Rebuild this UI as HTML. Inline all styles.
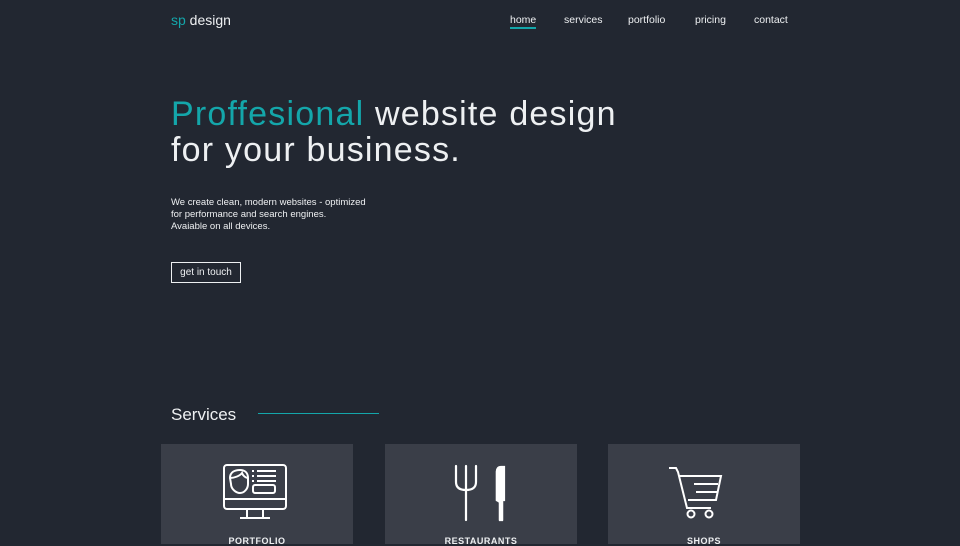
<!DOCTYPE html>
<html><head><style>
*{margin:0;padding:0;box-sizing:border-box}
body{width:960px;height:540px;overflow:hidden;background:#222731;font-family:"Liberation Sans",sans-serif;color:#eef0f2;position:relative}
.a{position:absolute}
.t{color:#14a6aa}
nav a{position:absolute;top:14px;font-size:10.5px;color:#eef0f2;text-decoration:none}
.card{position:absolute;top:444px;width:192px;height:100px;background:#3a3e48}
.card p{position:absolute;top:92px;width:100%;text-align:center;font-size:9px;font-weight:bold;letter-spacing:.5px}
</style></head><body>
<div class="a" style="left:171px;top:12px;font-size:14px"><span class="t">sp</span> design</div>
<nav>
<a style="left:510px;border-bottom:2px solid #14a6aa;padding-bottom:1px">home</a>
<a style="left:564px">services</a>
<a style="left:628px">portfolio</a>
<a style="left:695px">pricing</a>
<a style="left:754px">contact</a>
</nav>
<div class="a" style="left:171px;top:96px;font-size:34px;line-height:36px;letter-spacing:1.2px"><span class="t">Proffesional</span> website design<br>for your business.</div>
<div class="a" style="left:171px;top:197px;font-size:9.5px;line-height:12px">We create clean, modern websites - optimized<br>for performance and search engines.<br>Avaiable on all devices.</div>
<div class="a" style="left:171px;top:262px;width:70px;height:21px;border:1.5px solid #eef0f2;font-size:10px;line-height:19px;text-align:center">get in touch</div>
<div class="a" style="left:171px;top:405px;font-size:17px">Services</div>
<div class="a" style="left:258px;top:413px;width:121px;height:1px;background:#14a6aa"></div>
<div class="card" style="left:161px"><p>PORTFOLIO</p>
<svg class="a" style="left:60px;top:18px" width="70" height="60" viewBox="0 0 70 60" fill="none" stroke="#fff" stroke-width="2"><rect x="3" y="3" width="62" height="44" rx="3"/><line x1="3" y1="37" x2="65" y2="37"/><line x1="26" y1="47" x2="26" y2="56"/><line x1="42" y1="47" x2="42" y2="56"/><line x1="19" y1="56" x2="49" y2="56"/><path d="M9 16c0-6 5-8 10-8 5 0 8 3 8 8v6c0 5-4 9-8 9s-9-4-9-9z"/><path d="M9 16c4 0 10-2 12-5 1 3 4 5 6 5"/><line x1="31" y1="9" x2="33" y2="9"/><line x1="36" y1="9" x2="55" y2="9"/><line x1="31" y1="14" x2="33" y2="14"/><line x1="36" y1="14" x2="55" y2="14"/><line x1="31" y1="19" x2="33" y2="19"/><line x1="36" y1="19" x2="55" y2="19"/><rect x="32" y="23" width="22" height="8" rx="2"/></svg></div>
<div class="card" style="left:385px"><p>RESTAURANTS</p>
<svg class="a" style="left:66px;top:20px" width="60" height="60" viewBox="0 0 60 60" fill="none" stroke="#fff" stroke-width="2.2" stroke-linecap="round"><path d="M5 2v16q0 8 10 8q10 0 10-8V2"/><line x1="15" y1="2" x2="15" y2="56"/><path d="M50 4q-4 0-4 4v28l3 2v18" stroke-width="2.5"/><path d="M50 3q-4 0-4 5v28h7V3z" fill="#fff"/><line x1="51" y1="36" x2="51" y2="56" stroke-width="2.5"/></svg></div>
<div class="card" style="left:608px"><p>SHOPS</p>
<svg class="a" style="left:58px;top:18px" width="60" height="60" viewBox="0 0 60 60" fill="none" stroke="#fff" stroke-width="2"><path d="M3 6h7l2 4 9 36h24"/><path d="M13 14h42l-5 24H22"/><line x1="28" y1="22" x2="52" y2="22"/><line x1="30" y1="30" x2="51" y2="30"/><circle cx="25" cy="52" r="3.5"/><circle cx="43" cy="52" r="3.5"/></svg></div>
</body></html>
